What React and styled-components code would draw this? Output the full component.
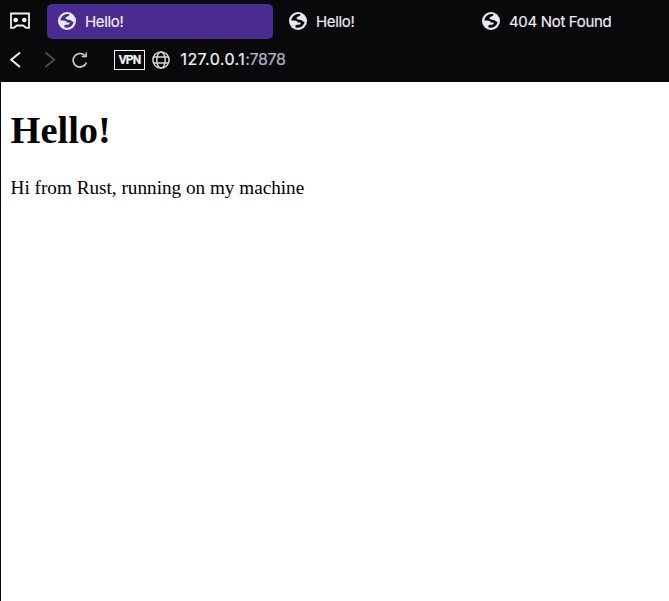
import React from 'react';
import styled, { createGlobalStyle } from 'styled-components';

const GlobalStyle = createGlobalStyle`
  body { margin: 0; background: #09090b; }
  * { box-sizing: border-box; }
`;
const Browser = styled.div`
  display: flex;
  flex-direction: column;
  height: 601px;
  overflow: hidden;
  background: #09090b;
  font-family: Inter, sans-serif;
`;
const TabBar = styled.nav`
  display: flex;
  height: 43px;
  padding: 4px 0 0 9px;
`;
const MenuButton = styled.div`
  display: flex;
  width: 38px;
  padding-top: 8px;
`;
const Tab = styled.div`
  display: flex;
  align-items: center;
  gap: 9px;
  flex: none;
  width: ${p => p.$width}px;
  height: 35px;
  padding-left: 11px;
  margin-right: 5px;
  border-radius: 5px;
  background: ${p => (p.$active ? '#4c2b91' : 'transparent')};
  color: #eeeef2;
  font-size: 15px;
  line-height: 20px;
  white-space: nowrap;
`;
const TabTitle = styled.span`
  letter-spacing: -0.33px;
  -webkit-text-stroke: 0.15px currentColor;
`;
const Favicon = styled.svg`
  flex: none;
  width: 18px;
  height: 18px;
  margin-bottom: 1px;
`;
const Toolbar = styled.div`
  display: flex;
  align-items: center;
  height: 39px;
  padding: 0 0 5px 9px;
`;
const NavButton = styled.div`
  display: flex;
  width: ${p => p.$width}px;
`;
const VpnBadge = styled.div`
  display: flex;
  align-items: center;
  justify-content: center;
  width: 31px;
  height: 20px;
  margin-right: 7px;
  border: 1px solid #f2f2f2;
  color: #f2f2f2;
  font-family: Roboto, sans-serif;
  font-size: 12px;
  font-weight: 700;
  letter-spacing: -0.8px;
  -webkit-text-stroke: 0.2px currentColor;
`;
const Address = styled.div`
  margin: -2px 0 0 10.5px;
  color: #f4f4f6;
  font-size: 16px;
  line-height: 20px;
  letter-spacing: 0.42px;
  -webkit-text-stroke: 0.2px currentColor;
`;
const Port = styled.span`
  color: #b3b0c8;
  letter-spacing: -0.3px;
`;
const Page = styled.main`
  flex: 1;
  margin-left: 1px;
  padding: 26px 9.6px;
  background: #fff;
  color: #000;
  font-family: "Liberation Serif", serif;
  font-size: 19.2px;
`;
const Heading = styled.h1`
  margin: 0;
  font-size: 38.4px;
  line-height: 44px;
`;
const Paragraph = styled.p`
  margin: 25px 0 0;
  line-height: 22px;
`;

const Earth = ({ ink = '#09090b' }) => (
  <Favicon viewBox="0 0 18 18">
    <circle cx="9" cy="9" r="9" fill="#e8eaed" />
    <path
      fill={ink}
      d="M11.5 2.3C7.3 1.2 3 3.8 2.3 8.5H5.4C7.4 8.5 8.5 9.2 8.8 10.6H11.2C12 10.8 11.8 12.1 10.8 12.4C9.2 12.8 7.2 12.4 6.4 13.4V15.2C10.8 17 15 14 15.6 9.8C14.4 9.7 13.7 9.1 12.9 8.4C12 7.7 11 7.9 9.6 7.7C8 7.5 7.3 6.7 7.8 5.6C8.2 4.7 9.2 4.6 10.1 4.3C10.9 4 11.3 3.2 11.5 2.3Z"
    />
  </Favicon>
);

const MaskIcon = () => (
  <svg width="22" height="18" viewBox="0 0 22 18" fill="none">
    <path d="M2 1.5H20V15.8H17.2L14 13.5H8L4.8 15.8H2Z" stroke="#f2f2f2" strokeWidth="1.8" />
    <circle cx="6.7" cy="8" r="2.3" fill="#f2f2f2" />
    <circle cx="15.3" cy="8" r="2.3" fill="#f2f2f2" />
  </svg>
);

const Chevron = ({ forward }) => (
  <svg width="12" height="16" viewBox="0 0 12 16" fill="none">
    <path d={forward ? 'M1.5 .5L10.3 7.8L1.5 15.1' : 'M11 .5L2.2 7.8L11 15.1'} stroke={forward ? '#4c4c4e' : '#f4f4f4'} strokeWidth="1.9" />
  </svg>
);

const ReloadIcon = () => (
  <svg width="16" height="17" viewBox="0 0 16 17" fill="none" stroke="#d0d0d0" strokeWidth="1.6">
    <path d="M14.4 10.5A6.8 6.8 0 1 1 12.9 3.6" />
    <path d="M14.2 .5V4.5H9.7" />
  </svg>
);

const WebIcon = () => (
  <svg width="18" height="18" viewBox="0 0 18 18" fill="none" stroke="#d8d8d8" strokeWidth="1.5">
    <circle cx="9" cy="9" r="8.1" />
    <ellipse cx="9" cy="9" rx="4.2" ry="8.1" />
    <path d="M1.7 6H16.3M1.7 12H16.3" />
  </svg>
);

export default function App() {
  return (
    <Browser>
      <GlobalStyle />
      <TabBar>
        <MenuButton><MaskIcon /></MenuButton>
        <Tab $active $width={226}><Earth ink="#4c2b91" /><TabTitle>Hello!</TabTitle></Tab>
        <Tab $width={188}><Earth /><TabTitle>Hello!</TabTitle></Tab>
        <Tab $width={188}><Earth /><TabTitle>404 Not Found</TabTitle></Tab>
      </TabBar>
      <Toolbar>
        <NavButton $width={35}><Chevron /></NavButton>
        <NavButton $width={28}><Chevron forward /></NavButton>
        <NavButton $width={42}><ReloadIcon /></NavButton>
        <VpnBadge>VPN</VpnBadge>
        <WebIcon />
        <Address>127.0.0.1<Port>:7878</Port></Address>
      </Toolbar>
      <Page>
        <Heading>Hello!</Heading>
        <Paragraph>Hi from Rust, running on my machine</Paragraph>
      </Page>
    </Browser>
  );
}
